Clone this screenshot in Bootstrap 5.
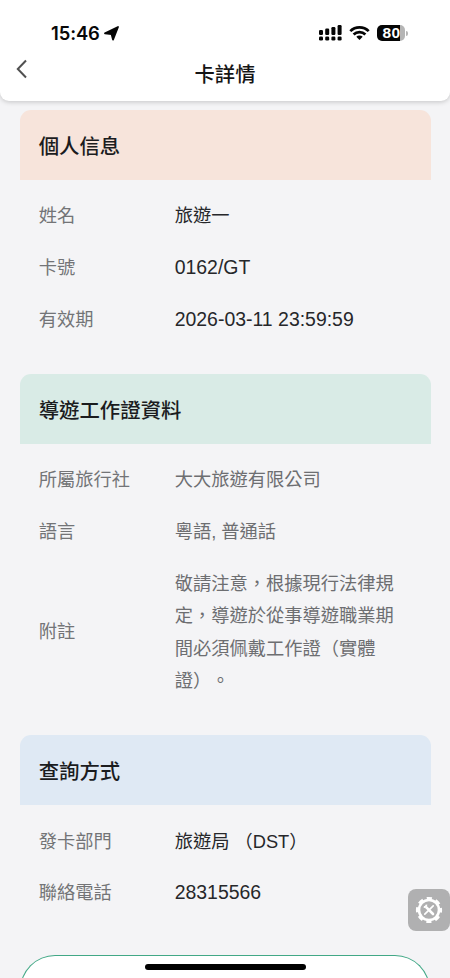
<!DOCTYPE html>
<html lang="zh-Hant">
<head>
<meta charset="utf-8">
<meta name="viewport" content="width=device-width, initial-scale=1">
<title>卡詳情</title>
<link href="https://cdn.jsdelivr.net/npm/bootstrap@5.3.0/dist/css/bootstrap.min.css" rel="stylesheet">
<style>
html,body{height:978px;overflow:hidden}
body{background:#f4f4f6;font-family:"Liberation Sans","Noto Sans CJK TC",sans-serif;font-size:18.25px;color:#26272a;text-spacing-trim:space-all}
.app-header{height:101px;background:#fff;border-radius:0 0 9px 9px;box-shadow:0 1px 5px rgba(0,0,0,.2)}
.status{height:50px;padding:16px 42px 0 51px}
.clock{font:600 18.4px/32px Inter,sans-serif;color:#080808;letter-spacing:-.1px}
.battery{width:28px;height:16px;border-radius:5px;background:linear-gradient(90deg,#050505 23px,#b5b5b5 23px);color:#fff;font:700 15.5px/16px "Liberation Sans",sans-serif;letter-spacing:.5px;padding-left:1px}
.nub{width:2px;height:5px;border-radius:0 2px 2px 0;background:#b5b5b5;margin-left:1px}
.title-row{height:48px}
.title-row h1{font-size:20.3px;font-weight:500;color:#151515;padding:3px 0 0 3px}
.sections{padding:9px 19.5px 0}
.info{margin-bottom:28.3px}
.info-head{height:70px;padding:4px 19.2px 0;border-radius:11px 11px 0 0;font-size:20.4px;font-weight:500;color:#1b1c1e}
.peach{background:#f7e4db}.mint{background:#d9ebe6}.sky{background:#dfe9f4}
.info-body{padding:10.6px 19.2px 0}
.info-row{padding:9.6px 0;line-height:32.5px}
.info-row dt{width:136px;font-weight:400;color:#737477}
.info-row dd{width:224px}
.info-row .latin{font-size:19.45px;line-height:30.5px;padding-bottom:2px}
.soft{color:#6d6e71}
.action{height:60px;margin:36px 20px 0;border:1px solid #42a886;border-radius:35px 35px 0 0;border-bottom:0;background:#fff}
.home-bar{left:145px;bottom:8px;width:161px;height:6px;border-radius:3px;background:#000}
.tool{left:408px;top:889px;width:42px;height:42px;border-radius:8px;background:#b0b0b1;border:0}
.wifi{margin:0 7px 0 6px}
</style>
<script src="https://cdn.jsdelivr.net/npm/bootstrap@5.3.0/dist/js/bootstrap.bundle.min.js"></script>
</head>
<body>
<header class="app-header position-relative">
  <div class="status d-flex justify-content-between align-items-center">
    <div class="d-flex align-items-center">
      <span class="clock">15:46</span>
      <svg class="ms-1" width="15" height="15" viewBox="0 0 15 15"><path d="M14 1 9 13.6 7.6 8.2 1 7.4Z" fill="#050505" stroke="#050505" stroke-width="1.8" stroke-linejoin="round"/></svg>
    </div>
    <div class="d-flex align-items-center">
      <svg width="24" height="16" viewBox="0 0 24 16" fill="#050505"><rect x="0" y="5" width="4" height="5" rx="1.2"/><rect x="6.2" y="3.5" width="4" height="6.5" rx="1.2"/><rect x="12.4" y="2" width="4" height="8" rx="1.2"/><rect x="18.6" y="0" width="4" height="10" rx="1.2"/><rect x="0" y="11.5" width="4" height="4" rx="1.3"/><rect x="6.2" y="11.5" width="4" height="4" rx="1.3"/><rect x="12.4" y="11.5" width="4" height="4" rx="1.3"/><rect x="18.6" y="11.5" width="4" height="4" rx="1.3"/></svg>
      <svg class="wifi" width="21" height="16" viewBox="0 0 21 16" fill="none" stroke="#050505" stroke-width="2.7"><path d="M1.3 6.1a13 13 0 0 1 18.4 0M4.6 9.5a8.4 8.4 0 0 1 11.8 0"/><path d="m10.5 15-3.2-3.3a4.6 4.6 0 0 1 6.4 0Z" fill="#050505" stroke="none"/></svg>
      <div class="battery text-center">80</div><div class="nub"></div>
    </div>
  </div>
  <div class="title-row d-flex align-items-center">
    <svg width="45" height="48" viewBox="0 0 45 48" fill="none" stroke="#505050" stroke-width="2"><path d="m26 10.5-8.2 8.5 8.2 8.5"/></svg>
    <h1 class="flex-grow-1 text-center mb-0">卡詳情</h1>
    <span class="px-4"></span>
  </div>
</header>
<main class="sections">
  <section class="info">
    <h2 class="info-head peach d-flex align-items-center mb-0">個人信息</h2>
    <dl class="info-body mb-0">
      <div class="info-row d-flex align-items-center"><dt>姓名</dt><dd class="mb-0">旅遊一</dd></div>
      <div class="info-row d-flex align-items-center"><dt>卡號</dt><dd class="mb-0 latin">0162/GT</dd></div>
      <div class="info-row d-flex align-items-center"><dt>有效期</dt><dd class="mb-0 latin">2026-03-11 23:59:59</dd></div>
    </dl>
  </section>
  <section class="info">
    <h2 class="info-head mint d-flex align-items-center mb-0">導遊工作證資料</h2>
    <dl class="info-body mb-0">
      <div class="info-row d-flex align-items-center"><dt>所屬旅行社</dt><dd class="mb-0 soft">大大旅遊有限公司</dd></div>
      <div class="info-row d-flex align-items-center"><dt>語言</dt><dd class="mb-0 soft">粵語, 普通話</dd></div>
      <div class="info-row d-flex align-items-center"><dt>附註</dt><dd class="mb-0 soft">敬請注意，根據現行法律規定，導遊於從事導遊職業期間必須佩戴工作證（實體證）。</dd></div>
    </dl>
  </section>
  <section class="info mb-0">
    <h2 class="info-head sky d-flex align-items-center mb-0">查詢方式</h2>
    <dl class="info-body mb-0">
      <div class="info-row d-flex align-items-center"><dt>發卡部門</dt><dd class="mb-0">旅遊局 （DST）</dd></div>
      <div class="info-row d-flex align-items-center"><dt>聯絡電話</dt><dd class="mb-0 latin">28315566</dd></div>
    </dl>
  </section>
</main>
<div class="action"></div>
<button class="tool position-fixed p-0 d-flex align-items-center justify-content-center" aria-label="工具">
  <svg width="28" height="28" viewBox="-14 -14 28 28" fill="none" stroke="#fff">
    <circle r="10" stroke-width="2.6"/>
    <circle r="11.8" stroke-width="2.6" stroke-dasharray="5.2 4.068" stroke-dashoffset="2.6"/>
    <path d="m-2.6-2.6 6.6 6.6" stroke-width="2.6" stroke-linecap="round"/>
    <path d="M4.2-4.2-4.2 4.2" stroke-width="1.7" stroke-linecap="round"/>
    <path d="M-5.2-3a2.3 2.3 0 0 0 2.6-2.4" stroke-width="1.8"/>
  </svg>
</button>
<div class="home-bar position-fixed"></div>
</body>
</html>
